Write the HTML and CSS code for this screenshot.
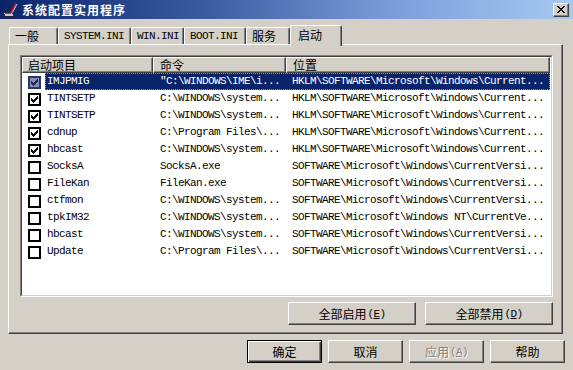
FILE: index.html
```html
<!DOCTYPE html>
<html lang="zh-CN">
<head>
<meta charset="utf-8">
<title>系统配置实用程序</title>
<link rel="stylesheet" href="styles.css">
</head>
<body>
<div class="window">
  <div class="titlebar">
    <svg class="app-icon" width="16" height="16" viewBox="0 0 16 16" shape-rendering="crispEdges">
      <polygon points="1,10 10,10 12,14 3,14" fill="#c8c8d0" stroke="#303040" stroke-width="1"/>
      <rect x="3" y="11" width="6" height="1" fill="#606070"/>
      <rect x="2" y="14" width="11" height="1" fill="#202030"/>
      <line x1="5" y1="10" x2="9" y2="3" stroke="#202020" stroke-width="1.3" shape-rendering="auto"/>
      <line x1="9" y1="11" x2="14" y2="1" stroke="#e01030" stroke-width="1.4" shape-rendering="auto"/>
      <line x1="10.5" y1="10.5" x2="15" y2="2" stroke="#ffffff" stroke-width="0.8" shape-rendering="auto"/>
    </svg>
    <span class="title">系统配置实用程序</span>
    <div class="close">
      <svg width="8" height="7" viewBox="0 0 8 7" shape-rendering="crispEdges">
        <path fill="#000" d="M0,0h2v1h-2z M6,0h2v1h-2z M1,1h2v1h-2z M5,1h2v1h-2z M2,2h4v1h-4z M3,3h2v1h-2z M2,4h4v1h-4z M1,5h2v1h-2z M5,5h2v1h-2z M0,6h2v1h-2z M6,6h2v1h-2z"/>
      </svg>
    </div>
  </div>

  <div class="body">
    <div class="tabs">
      <div class="tab t1">一般</div>
      <div class="tab t2 mono">SYSTEM.INI</div>
      <div class="tab t3 mono">WIN.INI</div>
      <div class="tab t4 mono">BOOT.INI</div>
      <div class="tab t5">服务</div>
      <div class="tab t6 active">启动</div>
    </div>

    <div class="panel">
      <div class="listview">
        <div class="lv-inner">
          <div class="header">
            <div class="hcell c1">启动项目</div>
            <div class="hcell c2">命令</div>
            <div class="hcell c3">位置</div>
          </div>

          <div class="row selected">
            <span class="cb checked"><svg viewBox="0 0 9 9" width="9" height="9" shape-rendering="crispEdges"><path d="M7,1h1v1h-1z M6,2h2v1h-2z M1,3h1v1h-1z M5,3h3v1h-3z M1,4h2v1h-2z M4,4h3v1h-3z M1,5h5v1h-5z M2,6h3v1h-3z M3,7h1v1h-1z"/></svg></span>
            <div class="sel">
              <span class="cell name mono">IMJPMIG</span>
              <span class="cell cmd mono">"C:\WINDOWS\IME\i...</span>
              <span class="cell loc mono">HKLM\SOFTWARE\Microsoft\Windows\Current...</span>
            </div>
          </div>

          <div class="row">
            <span class="cb checked"><svg viewBox="0 0 9 9" width="9" height="9" shape-rendering="crispEdges"><path d="M7,1h1v1h-1z M6,2h2v1h-2z M1,3h1v1h-1z M5,3h3v1h-3z M1,4h2v1h-2z M4,4h3v1h-3z M1,5h5v1h-5z M2,6h3v1h-3z M3,7h1v1h-1z"/></svg></span>
            <div class="sel">
              <span class="cell name mono">TINTSETP</span>
              <span class="cell cmd mono">C:\WINDOWS\system...</span>
              <span class="cell loc mono">HKLM\SOFTWARE\Microsoft\Windows\Current...</span>
            </div>
          </div>

          <div class="row">
            <span class="cb checked"><svg viewBox="0 0 9 9" width="9" height="9" shape-rendering="crispEdges"><path d="M7,1h1v1h-1z M6,2h2v1h-2z M1,3h1v1h-1z M5,3h3v1h-3z M1,4h2v1h-2z M4,4h3v1h-3z M1,5h5v1h-5z M2,6h3v1h-3z M3,7h1v1h-1z"/></svg></span>
            <div class="sel">
              <span class="cell name mono">TINTSETP</span>
              <span class="cell cmd mono">C:\WINDOWS\system...</span>
              <span class="cell loc mono">HKLM\SOFTWARE\Microsoft\Windows\Current...</span>
            </div>
          </div>

          <div class="row">
            <span class="cb checked"><svg viewBox="0 0 9 9" width="9" height="9" shape-rendering="crispEdges"><path d="M7,1h1v1h-1z M6,2h2v1h-2z M1,3h1v1h-1z M5,3h3v1h-3z M1,4h2v1h-2z M4,4h3v1h-3z M1,5h5v1h-5z M2,6h3v1h-3z M3,7h1v1h-1z"/></svg></span>
            <div class="sel">
              <span class="cell name mono">cdnup</span>
              <span class="cell cmd mono">C:\Program Files\...</span>
              <span class="cell loc mono">HKLM\SOFTWARE\Microsoft\Windows\Current...</span>
            </div>
          </div>

          <div class="row">
            <span class="cb checked"><svg viewBox="0 0 9 9" width="9" height="9" shape-rendering="crispEdges"><path d="M7,1h1v1h-1z M6,2h2v1h-2z M1,3h1v1h-1z M5,3h3v1h-3z M1,4h2v1h-2z M4,4h3v1h-3z M1,5h5v1h-5z M2,6h3v1h-3z M3,7h1v1h-1z"/></svg></span>
            <div class="sel">
              <span class="cell name mono">hbcast</span>
              <span class="cell cmd mono">C:\WINDOWS\system...</span>
              <span class="cell loc mono">HKLM\SOFTWARE\Microsoft\Windows\Current...</span>
            </div>
          </div>

          <div class="row">
            <span class="cb"></span>
            <div class="sel">
              <span class="cell name mono">SocksA</span>
              <span class="cell cmd mono">SocksA.exe</span>
              <span class="cell loc mono">SOFTWARE\Microsoft\Windows\CurrentVersi...</span>
            </div>
          </div>

          <div class="row">
            <span class="cb"></span>
            <div class="sel">
              <span class="cell name mono">FileKan</span>
              <span class="cell cmd mono">FileKan.exe</span>
              <span class="cell loc mono">SOFTWARE\Microsoft\Windows\CurrentVersi...</span>
            </div>
          </div>

          <div class="row">
            <span class="cb"></span>
            <div class="sel">
              <span class="cell name mono">ctfmon</span>
              <span class="cell cmd mono">C:\WINDOWS\system...</span>
              <span class="cell loc mono">SOFTWARE\Microsoft\Windows\CurrentVersi...</span>
            </div>
          </div>

          <div class="row">
            <span class="cb"></span>
            <div class="sel">
              <span class="cell name mono">tpkIM32</span>
              <span class="cell cmd mono">C:\WINDOWS\system...</span>
              <span class="cell loc mono">SOFTWARE\Microsoft\Windows NT\CurrentVe...</span>
            </div>
          </div>

          <div class="row">
            <span class="cb"></span>
            <div class="sel">
              <span class="cell name mono">hbcast</span>
              <span class="cell cmd mono">C:\WINDOWS\system...</span>
              <span class="cell loc mono">SOFTWARE\Microsoft\Windows\CurrentVersi...</span>
            </div>
          </div>

          <div class="row">
            <span class="cb"></span>
            <div class="sel">
              <span class="cell name mono">Update</span>
              <span class="cell cmd mono">C:\Program Files\...</span>
              <span class="cell loc mono">SOFTWARE\Microsoft\Windows\CurrentVersi...</span>
            </div>
          </div>
        </div>
      </div>

      <div class="panel-buttons">
        <div class="btn wide">全部启用<span class="mono">(<u>E</u>)</span></div>
        <div class="btn wide">全部禁用<span class="mono">(<u>D</u>)</span></div>
      </div>
    </div>

    <div class="footer">
      <div class="btn default">确定</div>
      <div class="btn">取消</div>
      <div class="btn disabled">应用<span class="mono">(<u>A</u>)</span></div>
      <div class="btn">帮助</div>
    </div>
  </div>
</div>
</body>
</html>
```

FILE: styles.css
```css
* { box-sizing: border-box; }

html, body {
  margin: 0;
  padding: 0;
}

body {
  width: 573px;
  height: 370px;
  overflow: hidden;
  background: #d4d0c8;
  font-family: "Noto Sans CJK SC", "DejaVu Sans", sans-serif;
  font-size: 12px;
  color: #000;
}

.mono {
  font-family: "Liberation Mono", "DejaVu Sans Mono", monospace;
  font-size: 11px;
  letter-spacing: -0.6px;
}

.window {
  display: flex;
  flex-direction: column;
  width: 573px;
  height: 370px;
}

/* ---------- title bar ---------- */
.titlebar {
  height: 19px;
  display: flex;
  align-items: center;
  padding: 0 4px 0 2px;
  background: linear-gradient(to right, #0a246a 0%, #3a5aa0 35%, #7f9fdc 70%, #a6caf0 100%);
}

.app-icon {
  flex: none;
  margin-top: 1px;
}

.title {
  margin-left: 4px;
  color: #fff;
  font-weight: bold;
  font-size: 12px;
  letter-spacing: 1px;
  line-height: 19px;
}

.close {
  margin-left: auto;
  width: 16px;
  height: 14px;
  display: flex;
  align-items: center;
  justify-content: center;
  background: #d4d0c8;
  border: 1px solid;
  border-color: #fff #404040 #404040 #fff;
  box-shadow: inset -1px -1px #808080;
  padding-bottom: 1px;
}

/* ---------- body ---------- */
.body {
  padding: 6px 10px 0 8px;
  display: flex;
  flex-direction: column;
}

.tabs {
  display: flex;
  align-items: flex-end;
  height: 19px;
  margin-left: 1px;
  position: relative;
  z-index: 1;
}

.tab {
  height: 17px;
  line-height: 15px;
  padding-left: 5px;
  white-space: nowrap;
  background: #d4d0c8;
  border-top: 1px solid #fff;
  border-left: 1px solid #fff;
  border-right: 1px solid #404040;
  box-shadow: inset -1px 0 #808080;
  border-radius: 2px 2px 0 0;
}

.tab.mono { line-height: 16px; }

.t1 { width: 49px; }
.t2 { width: 73px; }
.t3 { width: 53px; }
.t4 { width: 62px; }
.t5 { width: 44px; }
.t6 { width: 52px; }

.tab.active {
  height: 21px;
  margin-bottom: -2px;
  padding-left: 7px;
  line-height: 17px;
}

/* ---------- panel ---------- */
.panel {
  width: 555px;
  height: 290px;
  padding: 10px 9px 8px 11px;
  border: 1px solid;
  border-color: #fff #404040 #404040 #fff;
  box-shadow: inset -1px -1px #808080;
  display: flex;
  flex-direction: column;
}

.listview {
  width: 533px;
  height: 242px;
  flex: none;
  border: 1px solid;
  border-color: #808080 #fff #fff #808080;
}

.lv-inner {
  height: 100%;
  background: #fff;
  border: 1px solid;
  border-color: #404040 #d4d0c8 #d4d0c8 #404040;
  overflow: hidden;
}

.header {
  display: flex;
  height: 16px;
}

.hcell {
  height: 16px;
  line-height: 14px;
  padding-left: 5px;
  background: #d4d0c8;
  border-top: 1px solid #fff;
  border-left: 1px solid #fff;
  border-right: 1px solid #404040;
  border-bottom: 1px solid #404040;
  box-shadow: inset -1px -1px #808080;
  white-space: nowrap;
}

.hcell.c1 { width: 131px; }
.hcell.c2 { width: 133px; padding-left: 6px; }
.hcell.c3 { width: 264px; padding-left: 6px; }

.row {
  display: flex;
  height: 17px;
}

.cb {
  flex: none;
  width: 13px;
  height: 13px;
  margin: 3px 4px 0 6px;
  border: 2px solid #000;
  background: #fff;
  display: flex;
}

.cb svg { fill: #000; }

.sel {
  flex: 1;
  display: flex;
  height: 17px;
  line-height: 17px;
  min-width: 0;
  margin-right: 1px;
}

.cell {
  white-space: nowrap;
  overflow: hidden;
}

.cell.name { width: 108px; padding-left: 2px; }
.cell.cmd { width: 133px; padding-left: 7px; }
.cell.loc { flex: 1; padding-left: 6px; }

.row.selected .sel {
  background: #0a246a;
  color: #fff;
  outline: 1px dotted #8a96c0;
  outline-offset: -1px;
}

.row.selected .cb {
  border-color: #2a3668;
  background: #8890b2;
}

.row.selected .cb svg { fill: #1c2858; }

/* ---------- buttons ---------- */
.panel-buttons {
  display: flex;
  justify-content: flex-end;
  gap: 9px;
  margin-top: 5px;
}

.btn {
  width: 75px;
  height: 23px;
  display: flex;
  align-items: center;
  justify-content: center;
  background: #d4d0c8;
  border: 1px solid;
  border-color: #fff #404040 #404040 #fff;
  box-shadow: inset -1px -1px #808080;
  white-space: nowrap;
  line-height: 20px;
}

.btn.wide { width: 128px; }

.btn .mono { margin-left: 1px; }

.btn.default {
  border: 1px solid #000;
  box-shadow: inset 1px 1px #fff, inset -1px -1px #404040, inset -2px -2px #808080;
}

.btn.disabled {
  color: #808080;
  text-shadow: 1px 1px 0 #fff;
}

.footer {
  display: flex;
  justify-content: flex-end;
  gap: 6px;
  margin-top: 6px;
  margin-right: -2px;
}
```
